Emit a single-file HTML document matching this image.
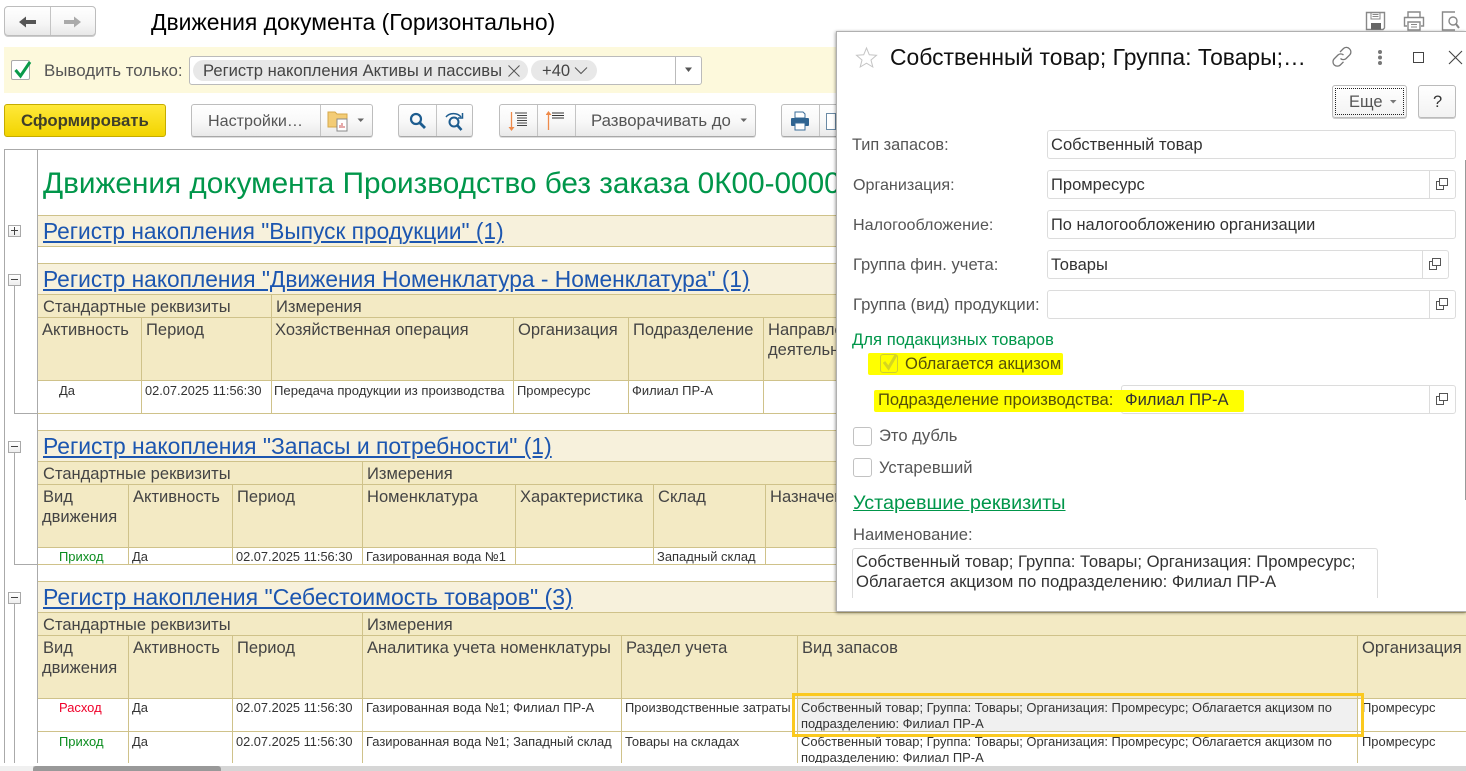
<!DOCTYPE html>
<html lang="ru"><head><meta charset="utf-8"><title>Движения документа</title>
<style>
html,body{margin:0;padding:0;width:1466px;height:771px;overflow:hidden;background:#fff}
body{font-family:"Liberation Sans",sans-serif;color:#444;position:relative}
.a{position:absolute;box-sizing:border-box}
.t{position:absolute;white-space:nowrap;line-height:20px;font-size:16.6px;color:#4a4a4a;margin-top:1px}
.l{position:absolute;background:#cfc28a}
.g{position:absolute;background:#aaa}
.sec{position:absolute;left:38px;background:#f7f1dc;height:32px;border-top:1px solid #cfc28a;border-bottom:1px solid #cfc28a;box-sizing:border-box}
.hd{position:absolute;left:38px;background:#f3eac4}
.lk{position:absolute;left:43px;white-space:nowrap;line-height:30px;font-size:22.7px;color:#1c56b0;text-decoration:underline}
.h{position:absolute;white-space:nowrap;line-height:20px;font-size:16.55px;color:#444;margin-top:1px}
.d{position:absolute;white-space:nowrap;line-height:16px;font-size:12.95px;color:#333;margin-top:1px}
.dt{font-size:12.8px}
.btn{position:absolute;box-sizing:border-box;height:33px;top:104px;border:1px solid #bdbdbd;border-bottom-color:#a8a8a8;border-radius:3px;background:linear-gradient(#fff,#f8f8f8 55%,#e9e9e9);box-shadow:0 1px 0 #ddd}
.dv{position:absolute;width:1px;background:#c4c4c4}
.fld{position:absolute;box-sizing:border-box;height:29px;border:1px solid #dcdcdc;border-radius:3px;background:#fff}
.lb{position:absolute;left:853px;white-space:nowrap;line-height:20px;font-size:16.3px;color:#555;margin-top:1px}
.v{position:absolute;white-space:nowrap;line-height:20px;font-size:16.55px;color:#333;margin-top:1px}
.box{position:absolute;box-sizing:border-box;width:13px;height:12px;border:1px solid #a9a9a9;background:linear-gradient(#fff,#eee);left:8px}
.box i{position:absolute;left:2px;right:2px;top:4px;height:1px;background:#444}
.cb{position:absolute;box-sizing:border-box;width:19px;height:19px;border:1px solid #c2c2c2;border-radius:3px;background:#fff;left:853px}
</style></head><body>

<!-- top nav -->
<div class="a" style="left:4px;top:6px;width:92px;height:30px;border:1px solid #bdbdbd;border-radius:4px;background:linear-gradient(#fff,#f6f6f6 60%,#e8e8e8);box-shadow:0 1px 0 #ccc"></div>
<div class="dv" style="left:50px;top:7px;height:28px"></div>
<svg class="a" style="left:18px;top:14px" width="20" height="16"><path d="M1 8 8 2.5V6H18V10H8V13.5Z" fill="#555"/></svg>
<svg class="a" style="left:62px;top:14px" width="20" height="16"><path d="M19 8 12 2.5V6H2V10H12V13.5Z" fill="#aaa"/></svg>
<div class="t" style="left:151px;top:10px;font-size:22.9px;line-height:24px;color:#000;margin:0">Движения документа (Горизонтально)</div>

<!-- top right icons -->
<svg class="a" style="left:1364px;top:10px" width="24" height="22" fill="none" stroke="#888" stroke-width="1.4"><path d="M2.500 2.500H20.500V18L19 19.500H2.500Z"/><path d="M7 2.500V9H16V2.500M8.500 4.500H14.500M8.500 6.500H14.500" stroke-width="1"/><rect x="7" y="13" width="10" height="6.500" fill="#666" stroke="none"/></svg>
<svg class="a" style="left:1402px;top:10px" width="24" height="22" fill="none" stroke="#888" stroke-width="1.4"><path d="M6 7V2H18V7M5 16H2.500V7.500H21.500V16H19"/><path d="M6 12H18V20H6Z"/><path d="M9 14.500H15M9 17H15" stroke-width="1"/></svg>
<svg class="a" style="left:1440px;top:10px" width="26" height="22" fill="none" stroke="#888" stroke-width="1.4"><path d="M15 2H2.500V20H15"/><circle cx="13" cy="11" r="4"/><path d="M16 14 19 18" stroke-width="2"/></svg>

<!-- filter bar -->
<div class="a" style="left:4px;top:47px;width:840px;height:46px;background:#fdf9dc"></div>
<div class="a" style="left:11px;top:60px;width:19px;height:20px;border:1px solid #aaa;border-radius:2px;background:#fff"></div>
<svg class="a" style="left:11px;top:58px" width="22" height="22"><path d="M4.500 12 9.500 18 19 4" fill="none" stroke="#0a9a4a" stroke-width="3"/></svg>
<div class="t" style="left:44px;top:60px;font-size:16.9px;color:#555">Выводить только:</div>
<div class="a" style="left:189px;top:56px;width:513px;height:29px;background:#fff;border:1px solid #bbb;border-radius:3px"></div>
<div class="dv" style="left:675px;top:57px;height:27px;background:#bbb"></div>
<div class="a" style="left:193px;top:60px;width:335px;height:21px;border-radius:11px;background:#e8e8e8"></div>
<div class="a" style="left:531px;top:60px;width:66px;height:21px;border-radius:11px;background:#e8e8e8"></div>
<div class="t" style="left:203px;top:60px;color:#444">Регистр накопления Активы и пассивы</div>
<svg class="a" style="left:507px;top:64px" width="14" height="14" fill="none" stroke="#555" stroke-width="1"><path d="M1.500 1.500 12.500 12.500M12.500 1.500 1.500 12.500"/></svg>
<div class="t" style="left:542px;top:60px;color:#444">+40</div>
<svg class="a" style="left:574px;top:66px" width="14" height="9" fill="none" stroke="#555"><path d="M1 1.500 7 7.500 13 1.500"/></svg>
<svg class="a" style="left:684px;top:67px" width="10" height="6"><path d="M1 0.500H8L4.500 5Z" fill="#555"/></svg>

<!-- toolbar -->
<div class="a" style="left:4px;top:104px;width:162px;height:33px;background:linear-gradient(#ffe93a,#f2d400);border:1px solid #c5ac00;border-radius:3px"></div>
<div class="t" style="left:21px;top:110px;font-weight:bold;font-size:16.8px;color:#3f3f2a">Сформировать</div>

<div class="btn" style="left:191px;width:182px"></div>
<div class="dv" style="left:320px;top:105px;height:31px"></div>
<div class="t" style="left:208px;top:110px;font-size:16.1px;color:#555">Настройки…</div>
<svg class="a" style="left:327px;top:110px" width="24" height="22"><path d="M1 2H8L10 4H20V17H1Z" fill="#f3cc76" stroke="#d6a84a"/><rect x="10" y="9" width="10" height="12" fill="#fff" stroke="#888"/><path d="M13 18V15M15 18V13M17 18V16" stroke="#c55" stroke-width="1"/></svg>
<svg class="a" style="left:357px;top:118px" width="8" height="5"><path d="M0.500 0.500H7L3.700 4Z" fill="#666"/></svg>

<div class="btn" style="left:398px;width:75px"></div>
<div class="dv" style="left:436px;top:105px;height:31px"></div>
<svg class="a" style="left:408px;top:111px" width="20" height="20" fill="none" stroke="#1d5c8f" stroke-width="2.200"><circle cx="8" cy="8" r="5"/><path d="M12 12 17 17" stroke-width="2.800"/></svg>
<svg class="a" style="left:444px;top:110px" width="22" height="22" fill="none" stroke="#1d5c8f" stroke-width="2"><circle cx="10" cy="12" r="4.500"/><path d="M13.500 15.500 17.500 20" stroke-width="2.600"/><path d="M2 7C5 3 13 2 17 7" stroke-width="1.500"/><path d="M18.500 3V8H14" stroke-width="1.500"/></svg>

<div class="btn" style="left:499px;width:257px"></div>
<div class="dv" style="left:537px;top:105px;height:31px"></div>
<div class="dv" style="left:575px;top:105px;height:31px"></div>
<svg class="a" style="left:508px;top:110px" width="24" height="22" fill="none"><path d="M3.500 2V19" stroke="#ee8a4a" stroke-width="1.300"/><path d="M0.500 17H6.500L3.500 21Z" fill="#ee8a4a"/><path d="M7 3H19M9 5.500H19M9 8H19M9 10.500H19M9 13H19M9 15.500H19" stroke="#444"/></svg>
<svg class="a" style="left:546px;top:110px" width="24" height="22" fill="none"><path d="M2.500 4V20" stroke="#ee8a4a" stroke-width="1.300"/><path d="M-0.500 5H5.500L2.500 1Z" fill="#ee8a4a"/><path d="M6 3H18M6 5.500H18M6 8H18" stroke="#333"/></svg>
<div class="t" style="left:591px;top:110px;font-size:16.8px;color:#555">Разворачивать до</div>
<svg class="a" style="left:740px;top:118px" width="8" height="5"><path d="M0.500 0.500H7L3.700 4Z" fill="#666"/></svg>

<div class="btn" style="left:781px;width:70px"></div>
<div class="dv" style="left:819px;top:105px;height:31px"></div>
<svg class="a" style="left:790px;top:111px" width="20" height="20"><path d="M5 1H13L15 3V7H5Z" fill="#fff" stroke="#3a6d99"/><rect x="1" y="7" width="18" height="8" rx="1" fill="#2f6491"/><rect x="5" y="12" width="10" height="7" fill="#fff" stroke="#3a6d99"/></svg>
<div class="a" style="left:826px;top:113px;width:10px;height:17px;border:1px solid #6a8aa5;background:#fff"></div>

<!-- report area -->
<div class="a" style="left:0;top:0;width:1466px;height:763px;overflow:hidden">
<div class="g" style="left:4px;top:149px;width:840px;height:1px"></div>
<div class="g" style="left:4px;top:149px;width:1px;height:620px"></div>
<div class="g" style="left:37px;top:149px;width:1px;height:620px"></div>

<div class="t" style="left:43px;top:166px;font-size:29.74px;line-height:34px;color:#00964a">Движения документа Производство без заказа 0К00-000001</div>

<!-- S1 -->
<div class="sec" style="top:215px;width:800px"></div>
<div class="lk" style="top:216px">Регистр накопления "Выпуск продукции" (1)</div>
<div class="box" style="top:225px"><i></i><i style="left:5px;right:auto;width:1px;top:1px;height:8px"></i></div>

<!-- S2 -->
<div class="hd" style="top:294px;width:800px;height:86px"></div>
<div class="sec" style="top:263px;width:800px"></div>
<div class="lk" style="top:264px;font-size:22.76px">Регистр накопления "Движения Номенклатура - Номенклатура" (1)</div>
<div class="l" style="left:38px;top:317px;width:800px;height:1px"></div>
<div class="l" style="left:38px;top:380px;width:800px;height:1px"></div>
<div class="l" style="left:38px;top:413px;width:800px;height:1px"></div>
<div class="l" style="left:271px;top:294px;width:1px;height:120px"></div>
<div class="l" style="left:141px;top:317px;width:1px;height:97px"></div>
<div class="l" style="left:513px;top:317px;width:1px;height:97px"></div>
<div class="l" style="left:628px;top:317px;width:1px;height:97px"></div>
<div class="l" style="left:763px;top:317px;width:1px;height:97px"></div>
<div class="h" style="left:43px;top:296px">Стандартные реквизиты</div>
<div class="h" style="left:276px;top:296px">Измерения</div>
<div class="h" style="left:42px;top:319px">Активность</div>
<div class="h" style="left:146px;top:319px">Период</div>
<div class="h" style="left:275px;top:319px">Хозяйственная операция</div>
<div class="h" style="left:518px;top:319px">Организация</div>
<div class="h" style="left:633px;top:319px">Подразделение</div>
<div class="h" style="left:768px;top:319px">Направление</div>
<div class="h" style="left:768px;top:339px">деятельности</div>
<div class="d" style="left:59px;top:382px">Да</div>
<div class="d dt" style="left:145px;top:382px">02.07.2025 11:56:30</div>
<div class="d" style="left:274px;top:382px;font-size:13.1px">Передача продукции из производства</div>
<div class="d" style="left:517px;top:382px">Промресурс</div>
<div class="d" style="left:632px;top:382px">Филиал ПР-А</div>
<div class="g" style="left:14px;top:286px;width:1px;height:127px"></div>
<div class="g" style="left:14px;top:413px;width:24px;height:1px"></div>
<div class="box" style="top:274px"><i></i></div>

<!-- S3 -->
<div class="hd" style="top:461px;width:800px;height:86px"></div>
<div class="sec" style="top:430px;width:800px"></div>
<div class="lk" style="top:431px;font-size:22.87px">Регистр накопления "Запасы и потребности" (1)</div>
<div class="l" style="left:38px;top:484px;width:800px;height:1px"></div>
<div class="l" style="left:38px;top:547px;width:800px;height:1px"></div>
<div class="l" style="left:38px;top:564px;width:800px;height:1px"></div>
<div class="l" style="left:362px;top:461px;width:1px;height:104px"></div>
<div class="l" style="left:128px;top:484px;width:1px;height:81px"></div>
<div class="l" style="left:232px;top:484px;width:1px;height:81px"></div>
<div class="l" style="left:515px;top:484px;width:1px;height:81px"></div>
<div class="l" style="left:653px;top:484px;width:1px;height:81px"></div>
<div class="l" style="left:765px;top:484px;width:1px;height:81px"></div>
<div class="h" style="left:43px;top:463px">Стандартные реквизиты</div>
<div class="h" style="left:367px;top:463px">Измерения</div>
<div class="h" style="left:43px;top:486px">Вид</div>
<div class="h" style="left:42px;top:506px">движения</div>
<div class="h" style="left:133px;top:486px">Активность</div>
<div class="h" style="left:237px;top:486px">Период</div>
<div class="h" style="left:367px;top:486px">Номенклатура</div>
<div class="h" style="left:520px;top:486px">Характеристика</div>
<div class="h" style="left:658px;top:486px">Склад</div>
<div class="h" style="left:770px;top:486px">Назначение</div>
<div class="d" style="left:59px;top:548px;color:#0a8c1e">Приход</div>
<div class="d" style="left:132px;top:548px">Да</div>
<div class="d dt" style="left:236px;top:548px">02.07.2025 11:56:30</div>
<div class="d" style="left:366px;top:548px">Газированная вода №1</div>
<div class="d" style="left:657px;top:548px">Западный склад</div>
<div class="g" style="left:14px;top:453px;width:1px;height:111px"></div>
<div class="g" style="left:14px;top:564px;width:24px;height:1px"></div>
<div class="box" style="top:441px"><i></i></div>

<!-- S4 -->
<div class="hd" style="top:612px;width:1428px;height:86px"></div>
<div class="sec" style="top:581px;width:1428px"></div>
<div class="lk" style="top:582px;font-size:23.04px">Регистр накопления "Себестоимость товаров" (3)</div>
<div class="l" style="left:38px;top:635px;width:1428px;height:1px"></div>
<div class="l" style="left:38px;top:698px;width:1428px;height:1px"></div>
<div class="l" style="left:38px;top:731px;width:1428px;height:1px"></div>
<div class="l" style="left:362px;top:612px;width:1px;height:152px"></div>
<div class="l" style="left:128px;top:635px;width:1px;height:129px"></div>
<div class="l" style="left:232px;top:635px;width:1px;height:129px"></div>
<div class="l" style="left:621px;top:635px;width:1px;height:129px"></div>
<div class="l" style="left:797px;top:635px;width:1px;height:129px"></div>
<div class="l" style="left:1357px;top:635px;width:1px;height:129px"></div>
<div class="h" style="left:43px;top:614px">Стандартные реквизиты</div>
<div class="h" style="left:367px;top:614px">Измерения</div>
<div class="h" style="left:43px;top:637px">Вид</div>
<div class="h" style="left:42px;top:657px">движения</div>
<div class="h" style="left:133px;top:637px">Активность</div>
<div class="h" style="left:237px;top:637px">Период</div>
<div class="h" style="left:367px;top:637px">Аналитика учета номенклатуры</div>
<div class="h" style="left:626px;top:637px">Раздел учета</div>
<div class="h" style="left:802px;top:637px">Вид запасов</div>
<div class="h" style="left:1362px;top:637px">Организация</div>
<div class="a" style="left:798px;top:699px;width:559px;height:32px;background:#f0f0f0"></div>
<div class="d" style="left:59px;top:699px;color:#f0002a">Расход</div>
<div class="d" style="left:132px;top:699px">Да</div>
<div class="d dt" style="left:236px;top:699px">02.07.2025 11:56:30</div>
<div class="d" style="left:366px;top:699px">Газированная вода №1; Филиал ПР-А</div>
<div class="d" style="left:625px;top:699px;font-size:12.85px">Производственные затраты</div>
<div class="d" style="left:801px;top:699px;font-size:12.93px">Собственный товар; Группа: Товары; Организация: Промресурс; Облагается акцизом по</div>
<div class="d" style="left:801px;top:715px">подразделению: Филиал ПР-А</div>
<div class="d" style="left:1362px;top:699px">Промресурс</div>
<div class="d" style="left:59px;top:733px;color:#0a8c1e">Приход</div>
<div class="d" style="left:132px;top:733px">Да</div>
<div class="d dt" style="left:236px;top:733px">02.07.2025 11:56:30</div>
<div class="d" style="left:366px;top:733px">Газированная вода №1; Западный склад</div>
<div class="d" style="left:625px;top:733px">Товары на складах</div>
<div class="d" style="left:801px;top:733px;font-size:12.93px">Собственный товар; Группа: Товары; Организация: Промресурс; Облагается акцизом по</div>
<div class="d" style="left:801px;top:749px">подразделению: Филиал ПР-А</div>
<div class="d" style="left:1362px;top:733px">Промресурс</div>
<div class="g" style="left:14px;top:604px;width:1px;height:160px"></div>
<div class="box" style="top:592px"><i></i></div>
<div class="a" style="left:792px;top:693px;width:572px;height:44px;border:3px solid #fbc91e"></div>
</div>

<!-- scrollbar -->
<div class="a" style="left:0;top:766px;width:1466px;height:5px;background:#d6d6d6"></div>
<div class="a" style="left:0;top:766px;width:33px;height:5px;background:#f0f0f0"></div>
<div class="a" style="left:33px;top:766px;width:188px;height:5px;background:#999;border-radius:3px 3px 0 0"></div>

<!-- dialog -->
<div class="a" style="left:836px;top:31px;width:630px;height:581px;background:#fff;border:1px solid #b0b0b0;border-right:0;box-shadow:0 1px 3px rgba(0,0,0,.4),-2px 0 3px rgba(0,0,0,.08)"></div>
<div class="a" style="left:1465px;top:160px;width:1px;height:340px;background:#999"></div>

<svg class="a" style="left:855px;top:46px" width="24" height="23"><path d="M11.500 2 14.300 8.800 21.500 9.300 16 14 17.800 21 11.500 17.200 5.200 21 7 14 1.500 9.300 8.700 8.800Z" fill="none" stroke="#c4c4c4"/></svg>
<div class="t" style="left:890px;top:45px;font-size:22.9px;line-height:24px;color:#111;margin:0">Собственный товар; Группа: Товары;…</div>
<svg class="a" style="left:1331px;top:46px" width="22" height="22" fill="none" stroke="#777" stroke-width="1.300"><path d="M9 6 12.500 2.500C14 1 16.800 1 18.500 2.800 20.300 4.500 20.300 7.300 18.800 8.800L15 12.600C13.500 14 11 14 9.500 12.500"/><path d="M12.500 9C11 7.500 8.500 7.500 7 9L3 13C1.500 14.500 1.700 17.500 3.300 19 5 20.500 7.800 20.500 9.300 19L12.500 15.800"/></svg>
<svg class="a" style="left:1376px;top:49px" width="8" height="17" fill="#777"><circle cx="4" cy="3" r="2"/><circle cx="4" cy="8.500" r="2"/><circle cx="4" cy="14" r="2"/></svg>
<div class="a" style="left:1413px;top:52px;width:11px;height:11px;border:1px solid #444"></div>
<svg class="a" style="left:1448px;top:50px" width="15" height="15" fill="none" stroke="#444" stroke-width="1.100"><path d="M1 1 14 14M14 1 1 14"/></svg>

<div class="a" style="left:1332px;top:85px;width:75px;height:33px;border:1px solid #bbb;border-radius:3px;background:linear-gradient(#fff,#f2f2f2);box-shadow:0 1px 0 #ccc"></div>
<div class="a" style="left:1335px;top:88px;width:69px;height:27px;border:1px dotted #222"></div>
<div class="t" style="left:1349px;top:91px;font-size:16.5px;color:#555">Еще</div>
<svg class="a" style="left:1390px;top:100px" width="7" height="4"><path d="M0 0H6.500L3.200 3.500Z" fill="#777"/></svg>
<div class="a" style="left:1418px;top:85px;width:38px;height:33px;border:1px solid #bbb;border-radius:3px;background:linear-gradient(#fff,#f2f2f2);box-shadow:0 1px 0 #ccc"></div>
<div class="t" style="left:1433px;top:91px;font-size:16.5px;color:#333">?</div>

<div class="lb" style="top:134px;left:852px">Тип запасов:</div>
<div class="fld" style="left:1047px;top:130px;width:409px"></div>
<div class="v" style="left:1051px;top:134px">Собственный товар</div>

<div class="lb" style="top:174px;font-size:16.1px">Организация:</div>
<div class="fld" style="left:1047px;top:170px;width:409px"></div>
<div class="dv" style="left:1429px;top:171px;height:27px;background:#dcdcdc"></div>
<div class="v" style="left:1051px;top:174px">Промресурс</div>

<div class="lb" style="top:214px;font-size:16.1px">Налогообложение:</div>
<div class="fld" style="left:1047px;top:210px;width:409px"></div>
<div class="v" style="left:1051px;top:214px;font-size:16.4px">По налогообложению организации</div>

<div class="lb" style="top:254px;font-size:16.6px">Группа фин. учета:</div>
<div class="fld" style="left:1047px;top:250px;width:402px"></div>
<div class="dv" style="left:1422px;top:251px;height:27px;background:#dcdcdc"></div>
<div class="v" style="left:1051px;top:254px">Товары</div>

<div class="lb" style="top:294px;font-size:16.7px">Группа (вид) продукции:</div>
<div class="fld" style="left:1047px;top:290px;width:409px"></div>
<div class="dv" style="left:1429px;top:291px;height:27px;background:#dcdcdc"></div>

<div class="t" style="left:852px;top:329px;font-size:16.7px;color:#00964a">Для подакцизных товаров</div>

<div class="fld" style="left:1121px;top:385px;width:335px"></div>
<div class="dv" style="left:1429px;top:386px;height:27px;background:#dcdcdc"></div>
<div class="a" style="left:868px;top:353px;width:195px;height:22px;background:#ffff00;border-radius:2px"></div>
<div class="a" style="left:874px;top:390px;width:370px;height:22px;background:#ffff00;border-radius:2px"></div>
<div class="a" style="left:880px;top:354px;width:18px;height:19px;border:1px solid #cfcf30;border-radius:3px"></div>
<svg class="a" style="left:880px;top:352px" width="20" height="20"><path d="M4 10 8.500 16 16 3" fill="none" stroke="#d6d620" stroke-width="3"/></svg>
<div class="v" style="left:905px;top:353px;color:#55500a">Облагается акцизом</div>
<div class="lb" style="left:878px;top:389px;font-size:16.6px;color:#55500a">Подразделение производства:</div>
<div class="v" style="left:1125px;top:389px">Филиал ПР-А</div>

<div class="cb" style="top:427px"></div>
<div class="lb" style="left:879px;top:425px;font-size:16.6px">Это дубль</div>
<div class="cb" style="top:458px"></div>
<div class="lb" style="left:879px;top:457px;font-size:16.6px">Устаревший</div>

<div class="t" style="left:853px;top:492px;font-size:19.8px;color:#00964a;text-decoration:underline">Устаревшие реквизиты</div>
<div class="lb" style="top:524px;font-size:16.6px">Наименование:</div>
<div class="a" style="left:852px;top:548px;width:526px;height:50px;border:1px solid #dcdcdc;border-bottom:0;border-radius:3px 3px 0 0"></div>
<div class="v" style="left:856px;top:551px;font-size:16.67px">Собственный товар; Группа: Товары; Организация: Промресурс;</div>
<div class="v" style="left:856px;top:571px;font-size:16.67px">Облагается акцизом по подразделению: Филиал ПР-А</div>

<svg class="a" style="left:1435px;top:177px" width="14" height="14" fill="none" stroke="#555"><path d="M4.500 1.500H12.500V8.500H4.500Z"/><path d="M4.500 4.500H1.500V12.500H8.500V8.500"/></svg>
<svg class="a" style="left:1428px;top:257px" width="14" height="14" fill="none" stroke="#555"><path d="M4.500 1.500H12.500V8.500H4.500Z"/><path d="M4.500 4.500H1.500V12.500H8.500V8.500"/></svg>
<svg class="a" style="left:1435px;top:297px" width="14" height="14" fill="none" stroke="#555"><path d="M4.500 1.500H12.500V8.500H4.500Z"/><path d="M4.500 4.500H1.500V12.500H8.500V8.500"/></svg>
<svg class="a" style="left:1435px;top:392px" width="14" height="14" fill="none" stroke="#555"><path d="M4.500 1.500H12.500V8.500H4.500Z"/><path d="M4.500 4.500H1.500V12.500H8.500V8.500"/></svg>

</body></html>
